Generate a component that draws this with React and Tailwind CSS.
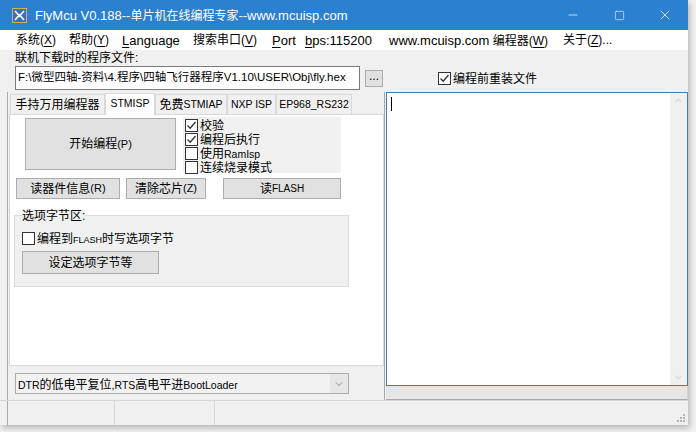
import { Minus, Square, X, ChevronDown, ChevronUp } from "lucide-react";

const font = "font-['Liberation_Sans','Noto_Sans_CJK_SC',sans-serif]";

// CJK runs and ASCII runs render at different sizes, like the Win32 font fallback
function Mixed({ text, cjk = "text-[12px]", latin = "text-[11px]" }) {
  const parts = text.split(/([\x00-\x7F]+)/).filter(Boolean);
  return (
    <>
      {parts.map((p, i) => (
        <span key={i} className={/^[\x00-\x7F]+$/.test(p) ? latin : cjk}>
          {p}
        </span>
      ))}
    </>
  );
}

function Check({ checked, label, latin, className = "" }) {
  return (
    <div className={`flex items-center h-[14px] ${className}`}>
      <span className="w-[13px] h-[13px] border border-[#333] bg-white flex items-center justify-center shrink-0">
        {checked && (
          <svg width="11" height="11" viewBox="0 0 11 11">
            <path d="M1.5 5.5 L4.2 8.2 L9.5 2" fill="none" stroke="#333" strokeWidth="1.3" />
          </svg>
        )}
      </span>
      <span className="ml-[2px] leading-[14px] h-[14px] text-black whitespace-nowrap overflow-hidden">
        <Mixed text={label} latin={latin} />
      </span>
    </div>
  );
}

function Btn({ children, className = "" }) {
  return (
    <div
      className={`flex items-center justify-center bg-[#e1e1e1] border border-[#adadad] text-[12px] text-black leading-none whitespace-nowrap ${className}`}
    >
      {children}
    </div>
  );
}

function U({ children }) {
  return <span className="underline underline-offset-2">{children}</span>;
}

export default function App() {
  const tabs = [
    { name: "手持万用编程器", w: "w-[95px]" },
    { name: "STMISP", w: "w-[50px]", active: true },
    { name: "免费STMIAP", w: "w-[72px]" },
    { name: "NXP ISP", w: "w-[49px]" },
    { name: "EP968_RS232", w: "w-[76px]" },
  ];

  return (
    <div className={`w-[696px] h-[432px] bg-[#f2f2f2] ${font}`}>
      <div className="w-[688px] h-[425px] flex flex-col bg-[#f0f0f0] shadow-[2px_3px_6px_rgba(0,0,0,0.25)]">
        {/* === Title bar === */}
        <div className="h-[30px] bg-[#2b80d0] flex items-center text-white shrink-0">
          <svg className="ml-[12px]" width="15" height="15" viewBox="0 0 15 15">
            <rect x="0.5" y="0.5" width="14" height="14" fill="#3a6fc8" stroke="#d8b04a" />
            <path d="M3 3 L7.5 8 L12 3 M3 12 L7.5 7 L12 12" stroke="#fff" strokeWidth="1.6" fill="none" />
          </svg>
          <span className="ml-[8px] leading-none whitespace-nowrap">
            <Mixed text="FlyMcu V0.188--单片机在线编程专家--www.mcuisp.com" cjk="text-[12px]" latin="text-[13px]" />
          </span>
          <div className="ml-auto flex h-full">
            <div className="w-[46px] flex items-center justify-center">
              <Minus size={14} strokeWidth={1.2} />
            </div>
            <div className="w-[46px] flex items-center justify-center">
              <Square size={11} strokeWidth={1.3} />
            </div>
            <div className="w-[46px] flex items-center justify-center">
              <X size={16} strokeWidth={1.1} />
            </div>
          </div>
        </div>

        {/* === Menu === */}
        <div className="h-[20px] bg-white flex items-center text-[12px] text-black leading-none shrink-0 pl-[16px] whitespace-nowrap">
          <span className="w-[53px]">系统(<U>X</U>)</span>
          <span className="w-[53px]">帮助(<U>Y</U>)</span>
          <span className="w-[71px] text-[13px]"><U>L</U>anguage</span>
          <span className="w-[79px]">搜索串口(<U>V</U>)</span>
          <span className="w-[33px] text-[13px]"><U>P</U>ort</span>
          <span className="w-[84px] text-[13px]"><U>b</U>ps:115200</span>
          <span className="w-[174px]"><span className="text-[13px]">www.mcuisp.com</span> 编程器(<U>W</U>)</span>
          <span>关于(<U>Z</U>)...</span>
        </div>

        {/* === File row === */}
        <div className="h-[42px] shrink-0 pl-[15px] pt-[2px]">
          <div className="text-[12px] leading-[12px] h-[12px] text-black">联机下载时的程序文件:</div>
          <div className="flex items-center mt-[2px]">
            <div className="w-[345px] h-[24px] border border-[#7a7a7a] bg-white flex items-center pl-[2px] text-black whitespace-nowrap overflow-hidden leading-none">
              <Mixed text="F:\微型四轴-资料\4.程序\四轴飞行器程序V1.10\USER\Obj\fly.hex" cjk="text-[11.5px]" latin="text-[11.5px]" />
            </div>
            <Btn className="ml-[5px] w-[18px] h-[17px] pb-[4px]">...</Btn>
            <Check className="ml-[55px]" checked label="编程前重装文件" />
          </div>
        </div>

        {/* === Middle === */}
        <div className="flex flex-1 min-h-0">
          {/* Left column */}
          <div className="w-[378px] ml-[7px] border-l border-r border-[#a9a9a9] flex flex-col">
            {/* Tabs */}
            <div className="flex h-[22px] items-end pl-[2px] text-black leading-none whitespace-nowrap">
              {tabs.map((t) =>
                t.active ? (
                  <div
                    key={t.name}
                    className={`${t.w} h-[22px] bg-white border border-b-0 border-[#d9d9d9] flex items-start pt-[4px] justify-center -mb-px relative z-10`}
                  >
                    <Mixed text={t.name} latin="text-[10.5px]" />
                  </div>
                ) : (
                  <div
                    key={t.name}
                    className={`${t.w} h-[20px] bg-[#f0f0f0] border border-b-0 border-[#d9d9d9] flex items-center justify-center`}
                  >
                    <Mixed text={t.name} latin="text-[10.5px]" />
                  </div>
                )
              )}
            </div>
            {/* Tab page */}
            <div className="h-[252px] bg-white border border-[#d9d9d9] ml-px relative">
              <div className="flex mt-[3px]">
                <Btn className="ml-[15px] w-[151px] h-[52px]">
                  <Mixed text="开始编程(P)" />
                </Btn>
                <div className="ml-[7px] w-[158px] h-[56px] bg-[#f0f0f0] -mt-px pl-[2px] pt-px flex flex-col">
                  <Check checked label="校验" />
                  <Check checked label="编程后执行" />
                  <Check label="使用RamIsp" latin="text-[10.5px]" />
                  <Check label="连续烧录模式" />
                </div>
              </div>
              <div className="flex mt-[5px] h-[21px]">
                <Btn className="ml-[6px] w-[104px]">
                  <Mixed text="读器件信息(R)" />
                </Btn>
                <Btn className="ml-[6px] w-[80px]">
                  <Mixed text="清除芯片(Z)" />
                </Btn>
                <Btn className="ml-[17px] w-[118px]">
                  <Mixed text="读FLASH" latin="text-[10px]" />
                </Btn>
              </div>
              {/* Group box */}
              <div className="ml-[4px] mt-[16px] w-[335px] h-[72px] bg-[#f0f0f0] border border-[#dcdcdc] relative">
                <div className="absolute -top-[6px] left-[7px] text-[12px] leading-none bg-[#f0f0f0] text-black">选项字节区:</div>
                <Check className="ml-[7px] mt-[15px]" label="编程到FLASH时写选项字节" latin="text-[9px]" />
                <Btn className="ml-[7px] mt-[6px] w-[137px] h-[23px]">设定选项字节等</Btn>
              </div>
            </div>
            {/* Combo */}
            <div className="ml-[7px] mt-[7px] w-[334px] h-[21px] border border-[#acacac] bg-[#f2f2f2] flex items-center">
              <span className="pl-[2px] leading-none text-black whitespace-nowrap flex-1">
                <Mixed text="DTR的低电平复位,RTS高电平进BootLoader" latin="text-[10.5px]" />
              </span>
              <div className="w-[18px] h-full bg-[#e6e6e6] flex items-center justify-center">
                <ChevronDown size={12} strokeWidth={1.2} className="text-[#555]" />
              </div>
            </div>
          </div>

          {/* Right column: memo */}
          <div className="flex-1 flex flex-col ml-px">
            <div className="flex-1 border border-[#3c7fb1] bg-white flex">
              <div className="flex-1 relative">
                <div className="absolute left-[4px] top-[4px] w-px h-[14px] bg-black" />
              </div>
              <div className="w-[17px] bg-[#f0f0f0] flex flex-col items-center justify-between py-[2px]">
                <ChevronUp size={11} strokeWidth={1.3} className="text-[#b0b0b0]" />
                <ChevronDown size={11} strokeWidth={1.3} className="text-[#b0b0b0]" />
              </div>
            </div>
            <div className="h-[14px] bg-[#e6e6e6] border-b border-[#a9a9a9] border-r border-r-[#d0d0d0]" />
          </div>
        </div>

        {/* === Status bar === */}
        <div className="h-[25px] border-t border-[#d7d7d7] flex shrink-0 relative">
          <div className="w-[108px] border-r border-[#d7d7d7] ml-[7px] border-l border-l-[#a9a9a9]" />
          <div className="w-[100px] border-r border-[#d7d7d7]" />
          <svg className="absolute right-[2px] bottom-[2px]" width="10" height="10" viewBox="0 0 10 10">
            <g fill="#b5b5b5">
              <rect x="7" y="1" width="2" height="2" />
              <rect x="4" y="4" width="2" height="2" />
              <rect x="7" y="4" width="2" height="2" />
              <rect x="1" y="7" width="2" height="2" />
              <rect x="4" y="7" width="2" height="2" />
              <rect x="7" y="7" width="2" height="2" />
            </g>
          </svg>
        </div>
      </div>
    </div>
  );
}
